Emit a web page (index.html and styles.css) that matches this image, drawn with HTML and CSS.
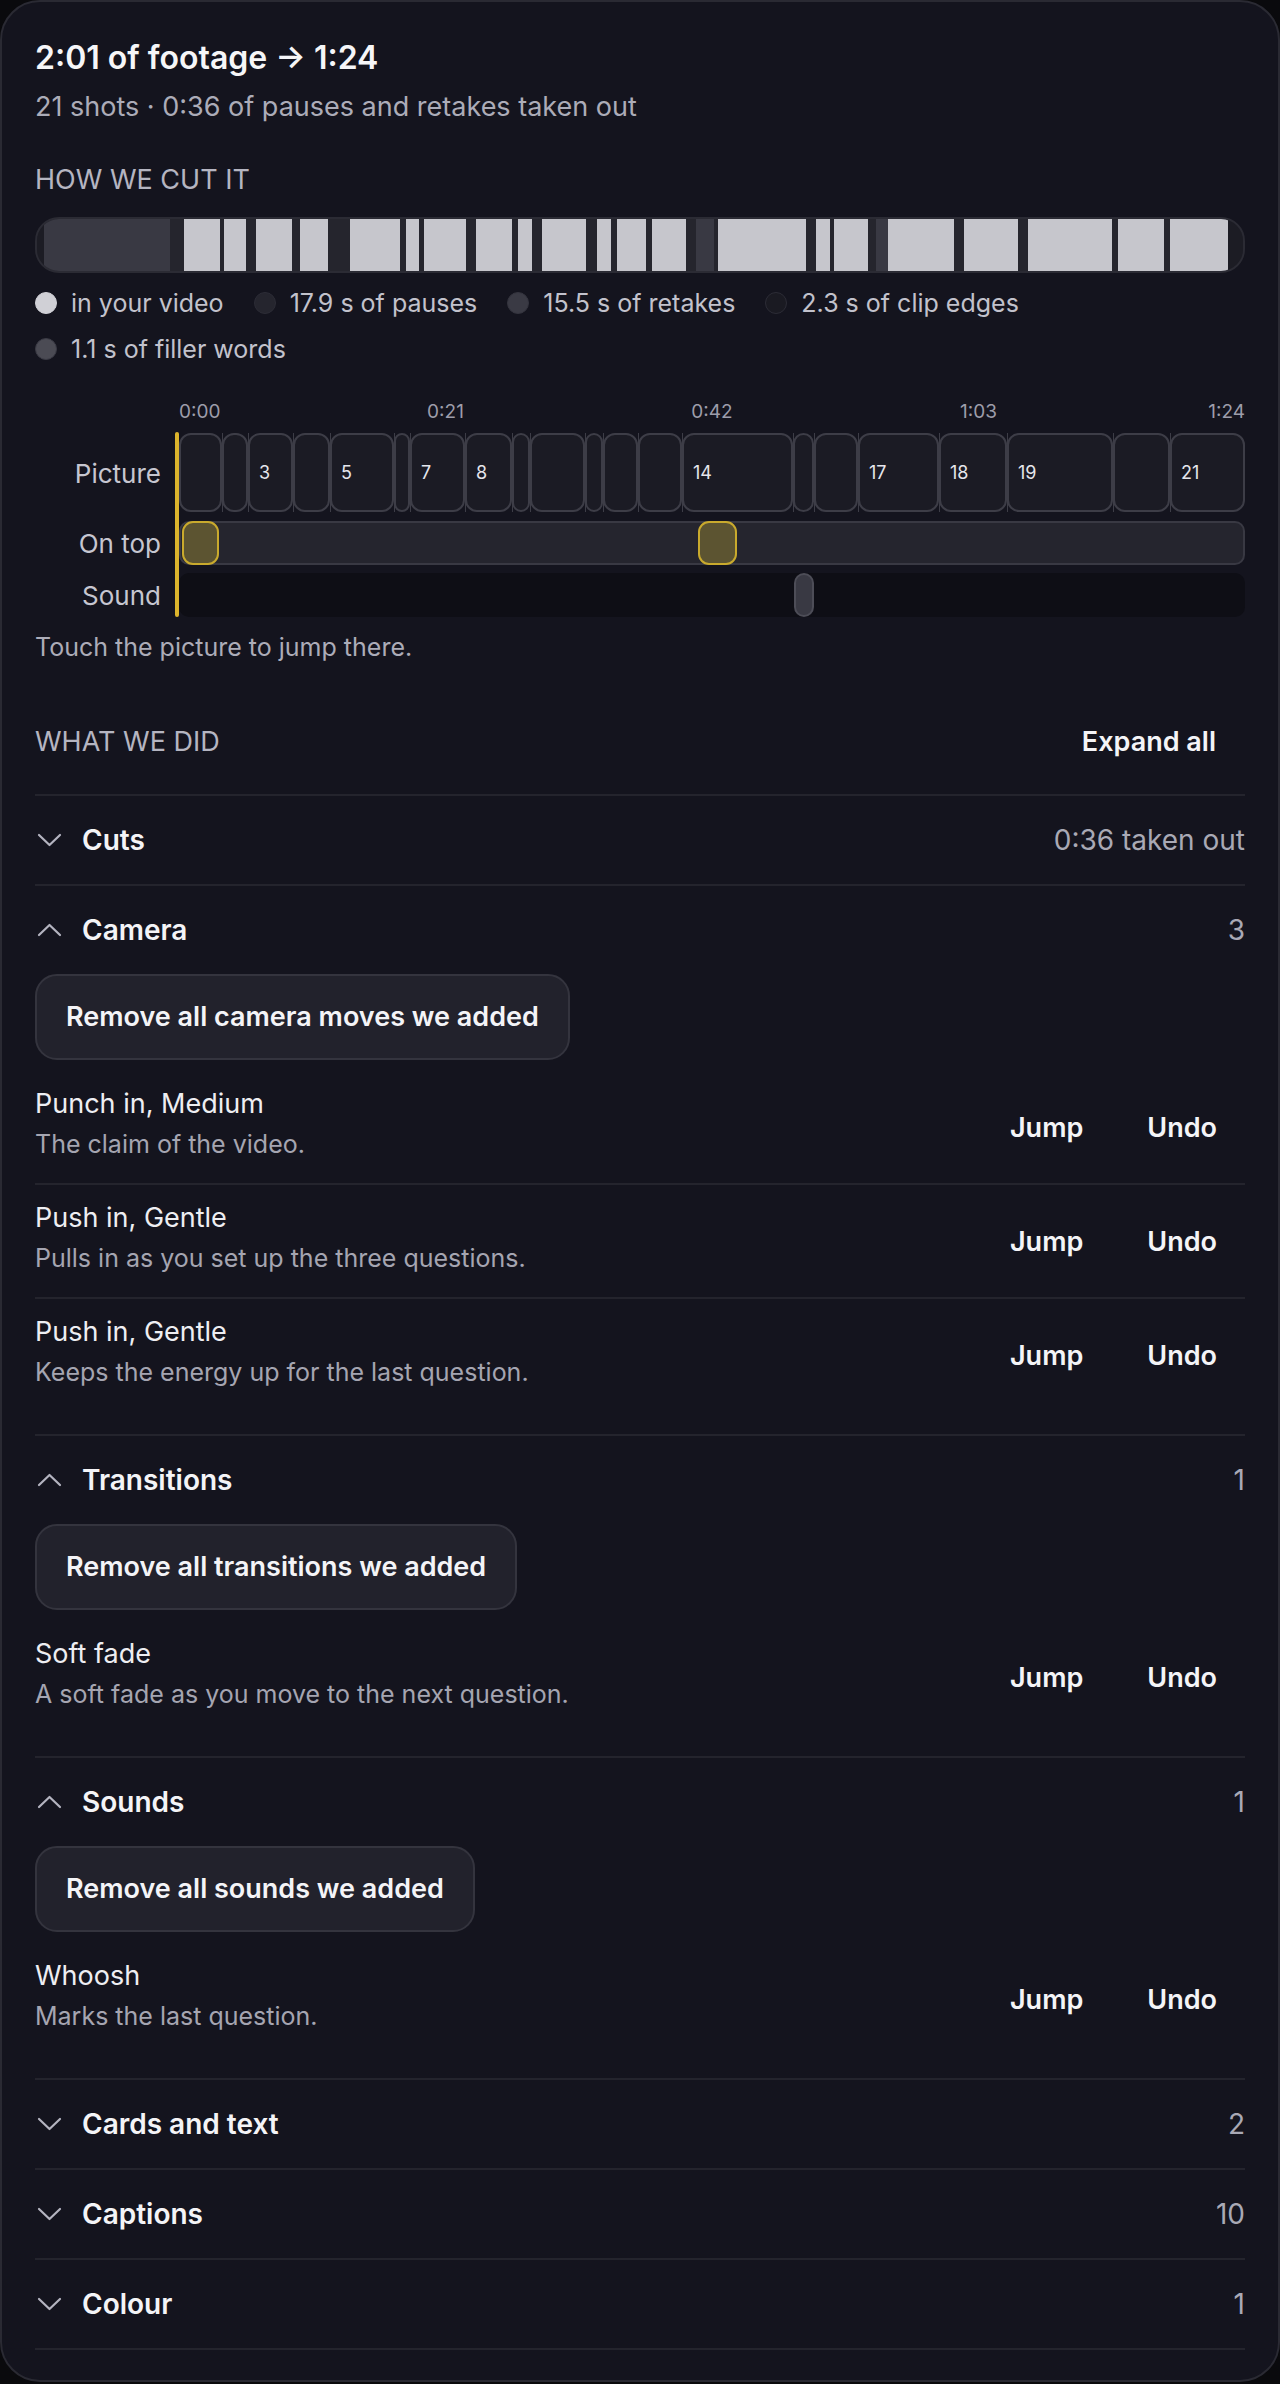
FILE: index.html
```html
<!DOCTYPE html>
<html lang="en">
<head>
    <meta charset="UTF-8">
    <meta name="viewport" content="width=device-width, initial-scale=1.0">
    <title>Edit summary</title>
    <link rel="stylesheet" href="styles.css">
</head>
<body>
    <div class="panel">
        <h1 class="title">2:01 of footage → 1:24</h1>
        <p class="subtitle">21 shots · 0:36 of pauses and retakes taken out</p>

        <h2 class="section-label cut-label">HOW WE CUT IT</h2>
        <div class="cut-bar" id="cut-bar"></div>
        <ul class="legend">
            <li><span class="dot dot-shot"></span>in your video</li>
            <li><span class="dot dot-pause"></span>17.9 s of pauses</li>
            <li><span class="dot dot-retake"></span>15.5 s of retakes</li>
            <li><span class="dot dot-edge"></span>2.3 s of clip edges</li>
            <li><span class="dot dot-filler"></span>1.1 s of filler words</li>
        </ul>

        <div class="timeline">
            <div class="ticks">
                <span class="tick tick-start">0:00</span>
                <span class="tick tick-q1">0:21</span>
                <span class="tick tick-q2">0:42</span>
                <span class="tick tick-q3">1:03</span>
                <span class="tick tick-end">1:24</span>
            </div>
            <div class="tracks">
                <div class="track-row">
                    <span class="track-label">Picture</span>
                    <div class="track track-picture" id="picture-track"></div>
                </div>
                <div class="track-row">
                    <span class="track-label">On top</span>
                    <div class="track track-overlay">
                        <span class="overlay-mark" style="left: 1px; width: 37px;"></span>
                        <span class="overlay-mark" style="left: 517px; width: 39px;"></span>
                    </div>
                </div>
                <div class="track-row">
                    <span class="track-label">Sound</span>
                    <div class="track track-sound">
                        <span class="sound-mark" style="left: 615px; width: 20px;"></span>
                    </div>
                </div>
                <div class="playhead"></div>
            </div>
        </div>
        <p class="hint">Touch the picture to jump there.</p>

        <div class="what-head">
            <h2 class="section-label">WHAT WE DID</h2>
            <button class="link-btn" type="button">Expand all</button>
        </div>

        <div class="groups">
            <div class="group">
                <div class="group-head">
                    <svg class="chev" viewBox="0 0 28 24"><path d="M4 7 L14.5 17 L25 7"/></svg>
                    <span class="group-name">Cuts</span>
                    <span class="group-count">0:36 taken out</span>
                </div>
            </div>

            <div class="group open">
                <div class="group-head">
                    <svg class="chev" viewBox="0 0 28 24"><path d="M4 17 L14.5 7 L25 17"/></svg>
                    <span class="group-name">Camera</span>
                    <span class="group-count">3</span>
                </div>
                <button class="remove-btn" type="button">Remove all camera moves we added</button>
                <div class="items">
                    <div class="item">
                        <div class="item-text">
                            <div class="item-title">Punch in, Medium</div>
                            <div class="item-desc">The claim of the video.</div>
                        </div>
                        <div class="item-actions">
                            <button class="link-btn" type="button">Jump</button>
                            <button class="link-btn" type="button">Undo</button>
                        </div>
                    </div>
                    <div class="item">
                        <div class="item-text">
                            <div class="item-title">Push in, Gentle</div>
                            <div class="item-desc">Pulls in as you set up the three questions.</div>
                        </div>
                        <div class="item-actions">
                            <button class="link-btn" type="button">Jump</button>
                            <button class="link-btn" type="button">Undo</button>
                        </div>
                    </div>
                    <div class="item">
                        <div class="item-text">
                            <div class="item-title">Push in, Gentle</div>
                            <div class="item-desc">Keeps the energy up for the last question.</div>
                        </div>
                        <div class="item-actions">
                            <button class="link-btn" type="button">Jump</button>
                            <button class="link-btn" type="button">Undo</button>
                        </div>
                    </div>
                </div>
            </div>

            <div class="group open">
                <div class="group-head">
                    <svg class="chev" viewBox="0 0 28 24"><path d="M4 17 L14.5 7 L25 17"/></svg>
                    <span class="group-name">Transitions</span>
                    <span class="group-count">1</span>
                </div>
                <button class="remove-btn" type="button">Remove all transitions we added</button>
                <div class="items">
                    <div class="item">
                        <div class="item-text">
                            <div class="item-title">Soft fade</div>
                            <div class="item-desc">A soft fade as you move to the next question.</div>
                        </div>
                        <div class="item-actions">
                            <button class="link-btn" type="button">Jump</button>
                            <button class="link-btn" type="button">Undo</button>
                        </div>
                    </div>
                </div>
            </div>

            <div class="group open">
                <div class="group-head">
                    <svg class="chev" viewBox="0 0 28 24"><path d="M4 17 L14.5 7 L25 17"/></svg>
                    <span class="group-name">Sounds</span>
                    <span class="group-count">1</span>
                </div>
                <button class="remove-btn" type="button">Remove all sounds we added</button>
                <div class="items">
                    <div class="item">
                        <div class="item-text">
                            <div class="item-title">Whoosh</div>
                            <div class="item-desc">Marks the last question.</div>
                        </div>
                        <div class="item-actions">
                            <button class="link-btn" type="button">Jump</button>
                            <button class="link-btn" type="button">Undo</button>
                        </div>
                    </div>
                </div>
            </div>

            <div class="group">
                <div class="group-head">
                    <svg class="chev" viewBox="0 0 28 24"><path d="M4 7 L14.5 17 L25 7"/></svg>
                    <span class="group-name">Cards and text</span>
                    <span class="group-count">2</span>
                </div>
            </div>
            <div class="group">
                <div class="group-head">
                    <svg class="chev" viewBox="0 0 28 24"><path d="M4 7 L14.5 17 L25 7"/></svg>
                    <span class="group-name">Captions</span>
                    <span class="group-count">10</span>
                </div>
            </div>
            <div class="group">
                <div class="group-head">
                    <svg class="chev" viewBox="0 0 28 24"><path d="M4 7 L14.5 17 L25 7"/></svg>
                    <span class="group-name">Colour</span>
                    <span class="group-count">1</span>
                </div>
            </div>
        </div>
    </div>

    <script>
        // widths in px of what was kept / cut, left to right
        const cutSegments = [
            ['edge', 7], ['retake', 126], ['gap', 14],
            ['shot', 36], ['gap', 4], ['shot', 22], ['gap', 10], ['shot', 36], ['gap', 8],
            ['shot', 28], ['gap', 22], ['shot', 50], ['gap', 6], ['shot', 13], ['gap', 5],
            ['shot', 42], ['gap', 10], ['shot', 36], ['gap', 6], ['shot', 14], ['gap', 10],
            ['shot', 44], ['gap', 11], ['shot', 14], ['gap', 6], ['shot', 29], ['gap', 6],
            ['shot', 34], ['gap', 10], ['retake', 18], ['gap', 4], ['shot', 88], ['gap', 10],
            ['shot', 14], ['gap', 4], ['shot', 34], ['gap', 8], ['retake', 12], ['shot', 66],
            ['gap', 10], ['shot', 54], ['gap', 10], ['shot', 84], ['gap', 6], ['shot', 46],
            ['gap', 6], ['shot', 58], ['edge', 0]
        ];

        const shots = [
            [1, 43, false], [2, 26, false], [3, 45, true], [4, 37, false], [5, 64, true],
            [6, 16, false], [7, 55, true], [8, 47, true], [9, 18, false], [10, 55, false],
            [11, 18, false], [12, 35, false], [13, 44, false], [14, 111, true], [15, 21, false],
            [16, 44, false], [17, 81, true], [18, 68, true], [19, 106, true], [20, 57, false],
            [21, 75, true]
        ];

        const bar = document.getElementById('cut-bar');
        cutSegments.forEach(([kind, width]) => {
            const seg = document.createElement('span');
            seg.className = 'seg seg-' + kind;
            if (width) seg.style.width = width + 'px';
            else seg.style.flex = '1';
            bar.appendChild(seg);
        });

        const track = document.getElementById('picture-track');
        shots.forEach(([num, width, showNum]) => {
            const clip = document.createElement('div');
            clip.className = 'clip';
            clip.style.width = width + 'px';
            if (showNum) clip.textContent = num;
            track.appendChild(clip);
        });
    </script>
</body>
</html>
```

FILE: styles.css
```css
* {
    box-sizing: border-box;
}
body {
    margin: 0;
    background-color: #0a0a0d;
    font-family: Inter, "Noto Sans", sans-serif;
    color: #f2f2f5;
}
.panel {
    background: #14141e;
    border: 2px solid #2a2a33;
    border-radius: 40px;
    padding: 36px 33px 30px;
}
.title {
    margin: 0;
    font-size: 32px;
    line-height: 40px;
    font-weight: 600;
    color: #f6f6f8;
}
.subtitle {
    margin: 10px 0 0;
    font-size: 27px;
    line-height: 38px;
    color: #acacb8;
}
.section-label {
    margin: 0;
    font-size: 27px;
    line-height: 36px;
    font-weight: 400;
    color: #b5b5c1;
}
.cut-label {
    margin-top: 36px;
}

/* kept / cut bar */
.cut-bar {
    display: flex;
    margin-top: 19px;
    height: 56px;
    background: #25252d;
    border: 2px solid #2b2b34;
    border-radius: 24px;
    overflow: hidden;
}
.seg {
    flex: none;
    height: 100%;
}
.seg-shot { background: #c6c6cc; }
.seg-retake { background: #393943; }
.seg-edge { background: #1c1c24; }
.seg-gap { background: transparent; }

.legend {
    list-style: none;
    margin: 12px 0 0;
    padding: 0;
    display: flex;
    flex-wrap: wrap;
    column-gap: 30px;
    row-gap: 10px;
    width: 1060px;
}
.legend li {
    display: flex;
    align-items: center;
    gap: 14px;
    font-size: 25px;
    line-height: 36px;
    color: #c2c2cc;
}
.dot {
    width: 22px;
    height: 22px;
    border-radius: 50%;
    border: 1px solid #2c2c36;
}
.dot-shot { background: #d0d0d6; border-color: #d0d0d6; }
.dot-pause { background: #25252e; }
.dot-retake { background: #3a3a44; border-color: #34343e; }
.dot-edge { background: #1a1a22; }
.dot-filler { background: #4b4b54; border-color: #3a3a44; }

/* timeline */
.timeline {
    margin-top: 33px;
}
.ticks {
    position: relative;
    height: 24px;
    margin-left: 144px;
    font-size: 19px;
    line-height: 24px;
    color: #9d9daa;
}
.tick {
    position: absolute;
    top: 0;
}
.tick-start { left: 0; }
.tick-q1 { left: 25%; transform: translateX(-50%); }
.tick-q2 { left: 50%; transform: translateX(-50%); }
.tick-q3 { left: 75%; transform: translateX(-50%); }
.tick-end { right: 0; }

.tracks {
    position: relative;
    margin-top: 9px;
    display: grid;
    gap: 8px;
}
.track-row {
    display: grid;
    grid-template-columns: 126px 1fr;
    column-gap: 18px;
    align-items: center;
}
.track-label {
    text-align: right;
    font-size: 26px;
    color: #c6c6d0;
}
.track {
    position: relative;
    height: 44px;
    border-radius: 10px;
}
.track-picture {
    display: flex;
    height: 79px;
    margin-bottom: 1px;
}
.clip {
    position: relative;
    flex: none;
    height: 100%;
    display: flex;
    align-items: center;
    padding-left: 9px;
    background: #1b1b24;
    border: 2px solid #3d3d47;
    border-radius: 12px;
    font-size: 18px;
    color: #e6e6ec;
}
.clip + .clip::before {
    content: "";
    position: absolute;
    left: -2px;
    top: -2px;
    bottom: -2px;
    width: 1px;
    background: #3d3d47;
}
.track-overlay {
    background: #25252e;
    border: 2px solid #393943;
}
.overlay-mark {
    position: absolute;
    top: -2px;
    bottom: -2px;
    background: #5c5431;
    border: 2px solid #c9aa2d;
    border-radius: 11px;
}
.track-sound {
    background: #0e0e15;
}
.sound-mark {
    position: absolute;
    top: 0;
    bottom: 0;
    background: #393943;
    border: 2px solid #4d4d57;
    border-radius: 10px;
}
.playhead {
    position: absolute;
    left: 140px;
    top: -1px;
    bottom: 0;
    width: 4px;
    border-radius: 2px;
    background: #dcb42c;
}
.hint {
    margin: 12px 0 0;
    font-size: 25px;
    line-height: 36px;
    color: #acacb8;
}

/* what we did */
.what-head {
    margin-top: 35px;
    display: flex;
    justify-content: space-between;
    align-items: center;
}
.link-btn {
    background: none;
    border: none;
    padding: 24px 29px;
    font-family: inherit;
    font-size: 27px;
    line-height: 36px;
    font-weight: 600;
    color: #f4f4f7;
    cursor: pointer;
}
.groups {
    margin-top: 10px;
    border-bottom: 2px solid #24242d;
}
.group {
    border-top: 2px solid #24242d;
}
.group.open {
    padding-bottom: 23px;
}
.group-head {
    display: flex;
    align-items: center;
    padding: 26px 0;
    line-height: 36px;
}
.chev {
    width: 28px;
    height: 24px;
    margin-right: 19px;
    fill: none;
    stroke: #b4b4c0;
    stroke-width: 2.2;
    stroke-linecap: round;
    stroke-linejoin: round;
}
.group-name {
    font-size: 28px;
    font-weight: 600;
    color: #f4f4f7;
}
.group-count {
    margin-left: auto;
    font-size: 28px;
    color: #a9a9b5;
}
.remove-btn {
    display: block;
    padding: 23px 29px;
    background: #22222c;
    border: 2px solid #34343e;
    border-radius: 22px;
    font-family: inherit;
    font-size: 27px;
    line-height: 36px;
    font-weight: 600;
    color: #f4f4f7;
    cursor: pointer;
}
.items {
    margin-top: 11px;
}
.item {
    display: flex;
    align-items: center;
    padding: 14px 0 20px;
}
.item + .item {
    border-top: 2px solid #24242d;
}
.item-title {
    font-size: 27px;
    line-height: 38px;
    color: #eeeef2;
}
.item-desc {
    margin-top: 2px;
    font-size: 25px;
    line-height: 38px;
    color: #a5a5b1;
}
.item-actions {
    margin-left: auto;
    margin-top: 8px;
    display: flex;
    gap: 8px;
}
.item-actions .link-btn {
    padding: 12px 28px;
}
```
